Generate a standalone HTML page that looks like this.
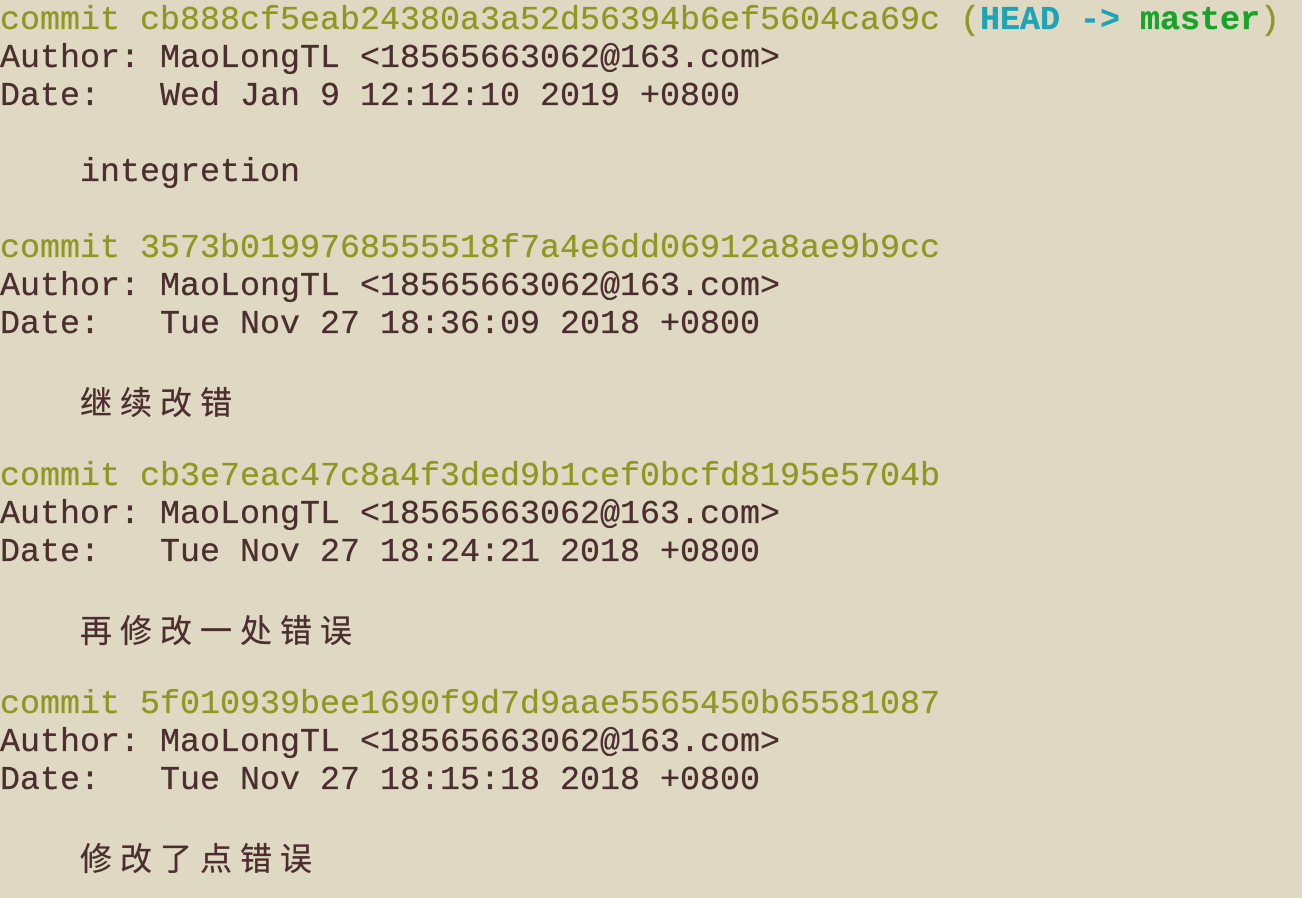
<!DOCTYPE html><html><head><meta charset="utf-8"><style>
body{margin:0;background:#dfd9c3;width:1302px;height:898px;overflow:hidden}
pre{margin:0;position:absolute;top:2px;left:0;font-family:"Liberation Mono","Noto Sans CJK SC",monospace;font-size:33.33px;line-height:38px;color:#4b2e2e;-webkit-text-stroke:0.3px}
.y{color:#929622}.c{color:#1ea4b4;font-weight:bold}.g{color:#1aa32a;font-weight:bold}
.z span{display:inline-block;width:40px;height:38px;line-height:38px;vertical-align:top;text-align:left;font-size:32px;font-family:"Noto Sans CJK SC",sans-serif;overflow:visible}
</style></head><body><pre><span class="y">commit cb888cf5eab24380a3a52d56394b6ef5604ca69c (<span class="c">HEAD -&gt; </span><span class="g">master</span>)</span>
Author: MaoLongTL &lt;18565663062@163.com&gt;
Date:   Wed Jan 9 12:12:10 2019 +0800

    integretion

<span class="y">commit 3573b0199768555518f7a4e6dd06912a8ae9b9cc</span>
Author: MaoLongTL &lt;18565663062@163.com&gt;
Date:   Tue Nov 27 18:36:09 2018 +0800

    <span class="z"><span>继</span><span>续</span><span>改</span><span>错</span></span>

<span class="y">commit cb3e7eac47c8a4f3ded9b1cef0bcfd8195e5704b</span>
Author: MaoLongTL &lt;18565663062@163.com&gt;
Date:   Tue Nov 27 18:24:21 2018 +0800

    <span class="z"><span>再</span><span>修</span><span>改</span><span>一</span><span>处</span><span>错</span><span>误</span></span>

<span class="y">commit 5f010939bee1690f9d7d9aae5565450b65581087</span>
Author: MaoLongTL &lt;18565663062@163.com&gt;
Date:   Tue Nov 27 18:15:18 2018 +0800

    <span class="z"><span>修</span><span>改</span><span>了</span><span>点</span><span>错</span><span>误</span></span>
</pre></body></html>
